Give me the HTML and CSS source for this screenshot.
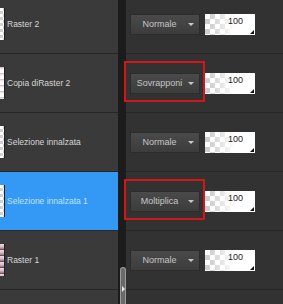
FILE: index.html
```html
<!DOCTYPE html>
<html>
<head>
    <title>Livelli</title>
    <link rel="stylesheet" href="styles.css">
</head>
<body>
    <div class="layers">
        <div class="names">
            <div class="layer">
                <div class="thumb"></div>
                <span class="name">Raster 2</span>
            </div>
            <div class="layer">
                <div class="thumb thumb-tint"></div>
                <span class="name">Copia diRaster 2</span>
            </div>
            <div class="layer">
                <div class="thumb"></div>
                <span class="name">Selezione innalzata</span>
            </div>
            <div class="layer selected">
                <div class="thumb"></div>
                <span class="name">Selezione innalzata 1</span>
            </div>
            <div class="layer">
                <div class="thumb thumb-photo"></div>
                <span class="name">Raster 1</span>
            </div>
        </div>

        <div class="scroll">
            <div class="thumb-bar">
                <span class="grip"></span>
            </div>
        </div>

        <div class="props">
            <div class="prop">
                <div class="blend"><span>Normale</span><i class="arrow"></i></div>
                <div class="opacity">100</div>
            </div>
            <div class="prop">
                <div class="blend"><span>Sovrapponi</span><i class="arrow"></i></div>
                <div class="opacity">100</div>
                <div class="mark"></div>
            </div>
            <div class="prop">
                <div class="blend"><span>Normale</span><i class="arrow"></i></div>
                <div class="opacity">100</div>
            </div>
            <div class="prop">
                <div class="blend"><span>Moltiplica</span><i class="arrow"></i></div>
                <div class="opacity">100</div>
                <div class="mark"></div>
            </div>
            <div class="prop">
                <div class="blend"><span>Normale</span><i class="arrow"></i></div>
                <div class="opacity">100</div>
            </div>
        </div>
    </div>
</body>
</html>
```

FILE: styles.css
```css
body {
    margin: 0;
    background: #323232;
    font-family: "Liberation Sans", Arial, sans-serif;
    overflow: hidden;
}
.layers {
    display: grid;
    grid-template-columns: 118px 8px 1fr;
    height: 304px;
    overflow: hidden;
}
.names {
    background: #3a3a3a;
    margin-top: -5px;
}
.layer {
    height: 58px;
    border-bottom: 1px solid #262626;
    display: flex;
    align-items: center;
    gap: 2px;
}
.layer.selected {
    background: #3399f5;
    border-bottom-color: #2a2a2a;
}
.thumb {
    width: 4px;
    height: 32px;
    border-right: 1px solid #202020;
    background-color: #fff;
    background-image: conic-gradient(#d0d0d0 25%, #fff 0 50%, #d0d0d0 0 75%, #fff 0);
    background-size: 6px 6px;
}
.thumb-tint {
    background-image: linear-gradient(#c9b3b9, #f4eef0 30%, #fff 60%);
}
.thumb-photo {
    background-image: linear-gradient(#e9dfe2, #d6bcc4 45%, #a98592 75%, #4f3441);
}
.name {
    color: #d6d6d6;
    font-size: 8.5px;
    white-space: nowrap;
}
.selected .name {
    color: #c4e2ff;
}
.scroll {
    background: #1c1c1c;
    display: flex;
    flex-direction: column;
}
.thumb-bar {
    margin: 267px 0 0 2px;
    width: 4px;
    flex: 1;
    background: #6a6a6a;
    border: 1px solid #9a9a9a;
    border-bottom: none;
    border-radius: 3px 3px 0 0;
    display: flex;
    justify-content: center;
    padding-top: 18px;
}
.grip {
    width: 0;
    height: 0;
    border-top: 3px solid transparent;
    border-bottom: 3px solid transparent;
    border-left: 3px solid #e8e8e8;
}
.props {
    margin-top: -5px;
}
.prop {
    position: relative;
    height: 58px;
    border-bottom: 1px solid #262626;
    display: flex;
    align-items: center;
    gap: 5px;
    padding-left: 4px;
}
.blend {
    width: 70px;
    height: 21px;
    box-sizing: border-box;
    background: linear-gradient(#4a4a4a, #3c3c3c);
    border: 1px solid #2c2c2c;
    display: flex;
    align-items: center;
    color: #c6c6c6;
    font-size: 9px;
}
.blend span {
    flex: 1;
    text-align: center;
}
.arrow {
    width: 0;
    height: 0;
    margin-right: 5px;
    border-left: 3px solid transparent;
    border-right: 3px solid transparent;
    border-top: 3px solid #c8c8c8;
}
.opacity {
    position: relative;
    width: 50px;
    height: 21px;
    box-sizing: border-box;
    padding: 2px 12px 0 0;
    text-align: right;
    font-size: 9px;
    color: #222;
    background:
        linear-gradient(to right, rgba(255,255,255,0) 10%, #fff 60%),
        conic-gradient(#cfcfcf 25%, #fff 0 50%, #cfcfcf 0 75%, #fff 0) 0 0 / 10px 10px;
    background-color: #fff;
}
.opacity::after {
    content: "";
    position: absolute;
    right: 1px;
    bottom: 1px;
    border-left: 4px solid transparent;
    border-bottom: 4px solid #111;
}
.mark {
    position: absolute;
    left: -2px;
    top: 7px;
    width: 81px;
    height: 41px;
    box-sizing: border-box;
    border: 2px solid #d41616;
}
```
